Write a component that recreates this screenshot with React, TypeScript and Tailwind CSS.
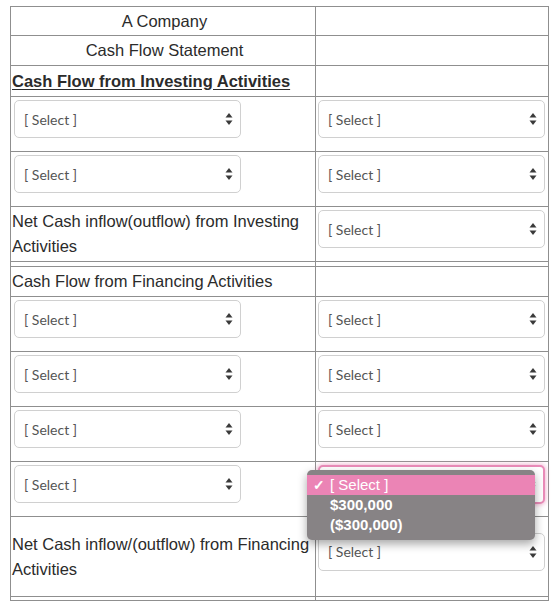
import type { ReactNode } from "react";

// Up/down chevron pair drawn at the right edge of each select
function SortArrows() {
  return (
    <svg width="8" height="14" viewBox="0 0 8 14" className="shrink-0">
      <path d="M4 1 L7.5 5.5 L0.5 5.5 Z" fill="#3a3a3a" />
      <path d="M4 13 L7.5 8.5 L0.5 8.5 Z" fill="#3a3a3a" />
    </svg>
  );
}

function SelectBox({ focused = false, children }: { focused?: boolean; children?: ReactNode }) {
  return (
    <div className="relative mb-[10px]">
      <div
        className={
          focused
            ? "flex h-[39px] w-[227px] items-center justify-between rounded-[5px] border-2 border-[#e98bb8] bg-white pl-[9px] pr-[7px] shadow-[0_0_4px_1px_rgba(233,139,184,0.6)]"
            : "flex h-[38px] w-[227px] items-center justify-between rounded-[5px] border border-[#d0d0d0] bg-white pl-[9px] pr-[7px]"
        }
      >
        <span className="font-['Lato',_sans-serif] text-[14px] text-[#555]">[ Select ]</span>
        <SortArrows />
      </div>
      {children}
    </div>
  );
}

// Native-style option list shown open under the focused select
function OpenMenu() {
  const options = ["$300,000", "($300,000)"];
  return (
    <div className="absolute left-[-11px] top-[5px] z-10 w-[228px] rounded-[5px] bg-[#878385] py-[5px] font-['Liberation_Sans',_sans-serif] text-[15px] font-bold leading-[20px] text-white shadow-[0_4px_10px_rgba(0,0,0,0.35)]">
      <div className="flex h-[20px] items-center bg-[#eb84b5]">
        <span className="w-[23px] pl-[6px] text-[14px]">✓</span>
        <span className="font-normal">[ Select ]</span>
      </div>
      {options.map((o) => (
        <div key={o} className="h-[20px] pl-[23px]">
          {o}
        </div>
      ))}
    </div>
  );
}

function Row({
  h,
  left,
  right,
  center = false,
}: {
  h: string;
  left?: ReactNode;
  right?: ReactNode;
  center?: boolean;
}) {
  return (
    <div className={`grid grid-cols-[305px_233px] ${h}`}>
      <div
        className={`flex items-center border-r border-b border-[#8f8f8f] pl-[3px] ${
          center ? "justify-center" : ""
        }`}
      >
        {left}
      </div>
      <div className="flex items-center border-r border-b border-[#8f8f8f] pl-[2px]">{right}</div>
    </div>
  );
}

const Label = ({ children }: { children: ReactNode }) => (
  <span className="-ml-[2px] leading-[25px]">{children}</span>
);

export default function App() {
  return (
    <div className="h-[602px] w-[560px] bg-white pl-[10px] pt-[6px] font-['Liberation_Sans',_Arial,_sans-serif] text-[16.5px] text-[#2b2b2b]">
      <div className="w-[539px] border-t border-l border-[#8f8f8f]">
        <Row h="h-[29px]" center left={<span>A Company</span>} />
        <Row h="h-[30px]" center left={<span>Cash Flow Statement</span>} />
        <Row
          h="h-[31px]"
          left={
            <span className="-ml-[2px] font-bold underline underline-offset-2">
              Cash Flow from Investing Activities
            </span>
          }
        />
        <Row h="h-[55px]" left={<SelectBox />} right={<SelectBox />} />
        <Row h="h-[55px]" left={<SelectBox />} right={<SelectBox />} />
        <Row
          h="h-[55px]"
          left={<Label>Net Cash inflow(outflow) from Investing Activities</Label>}
          right={<SelectBox />}
        />
        <Row h="h-[5px]" />
        <Row h="h-[30px]" left={<Label>Cash Flow from Financing Activities</Label>} />
        <Row h="h-[55px]" left={<SelectBox />} right={<SelectBox />} />
        <Row h="h-[55px]" left={<SelectBox />} right={<SelectBox />} />
        <Row h="h-[55px]" left={<SelectBox />} right={<SelectBox />} />
        <Row
          h="h-[55px]"
          left={<SelectBox />}
          right={
            <SelectBox focused>
              <OpenMenu />
            </SelectBox>
          }
        />
        <Row
          h="h-[80px]"
          left={<Label>Net Cash inflow/(outflow) from Financing Activities</Label>}
          right={<SelectBox />}
        />
        <Row h="h-[4px]" />
      </div>
    </div>
  );
}
